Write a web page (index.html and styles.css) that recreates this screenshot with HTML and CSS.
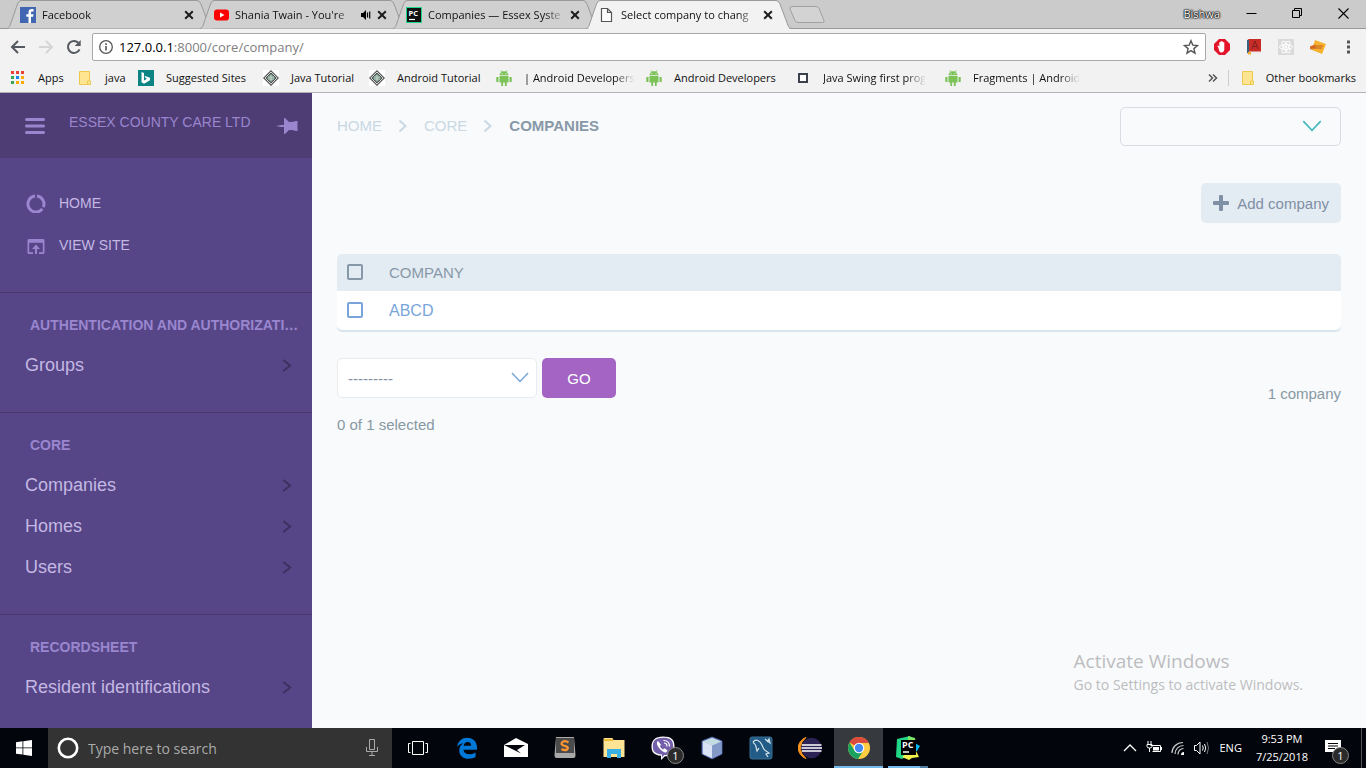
FILE: index.html
```html
<!DOCTYPE html>
<html lang="en">
<head>
<meta charset="utf-8">
<title>Select company to change</title>
<link rel="stylesheet" href="styles.css">
</head>
<body>
<svg class="defs" width="0" height="0" aria-hidden="true">
  <symbol id="tab" viewBox="0 0 206 29"><path d="M0 28.5C2 28 2.500 27 3 25.500L10.500 4Q12 .5 14 .5H190Q192.500 .5 194 4L202 25.500Q203 28.500 206 28.500"/></symbol>
  <symbol id="x" viewBox="0 0 10 10"><path d="M1.200 1.200l7.600 7.600M8.800 1.200L1.200 8.800" stroke="#1c1c1c" stroke-width="2"/></symbol>
  <symbol id="android" viewBox="0 0 16 16"><path fill="#7bc257" d="M3.500 5.300C3.700 3.400 4.600 2.500 5.500 1.900L4.500.4l.4-.3L6 1.600c1.200-.4 2.800-.4 4 0L11.100.1l.4.3-1 1.500c1 .6 1.800 1.500 2 3.400zM3.500 6h9v6.500H10.700V16H8.900v-3.500H7.100V16H5.300v-3.500H3.500zM.3 7h2.200v5H.3zm13.200 0h2.200v5h-2.200z"/><path fill="#f2f2f2" d="M5.500 3.300h1v1h-1zm4 0h1v1h-1z"/></symbol>
  <symbol id="diamond" viewBox="0 0 16 16"><path fill="#fff" d="M0 0h16v16H0z"/><path d="M8 .8L15.200 8 8 15.200.8 8z" fill="#fff" stroke="#555" stroke-width="1.200"/><path d="M8 3l5 5-5 5-5-5z" fill="#6f9080" stroke="#333" stroke-width=".8"/><path d="M5 7h6M5 9h6M8 5v6" stroke="#dce8e0" stroke-width=".8"/></symbol>
  <symbol id="folder" viewBox="0 0 14 16"><path d="M1.500 1.500h10v9.500h1v3.500h-11z" fill="#ffe592" stroke="#ecc94e"/><path d="M9.500 14v-3h2" fill="none" stroke="#ecc94e"/></symbol>
  <symbol id="chev" viewBox="0 0 10 14"><path d="M1 1l7.500 6L1 13" fill="none" stroke="currentColor"/></symbol>
  <symbol id="down" viewBox="0 0 18 11"><path d="M1 1l8 8.500L17 1" fill="none" stroke="currentColor" stroke-width="1.500"/></symbol>
</svg>

<header class="browser">
  <div class="tabstrip">
    <div class="tab">
      <svg class="tab-shape"><use href="#tab"/></svg>
      <svg class="fav" viewBox="0 0 16 16"><path d="M0 0h16v16H0z" fill="#4267b2"/><path d="M11 16V9.800h2.100l.4-2.500H11V5.800c0-.8.300-1.300 1.300-1.300h1.300V2.300C13.300 2.200 12.600 2 11.800 2 9.800 2 8.500 3.200 8.500 5.400v1.900H6.300v2.500h2.200V16z" fill="#fff"/></svg>
      <span class="tab-title">Facebook</span>
      <button class="close" aria-label="Close Facebook"><svg><use href="#x"/></svg></button>
    </div>
    <div class="tab">
      <svg class="tab-shape"><use href="#tab"/></svg>
      <svg class="fav" viewBox="0 0 16 16"><rect x="1" y="2.500" width="15" height="11" rx="3" fill="#f00"/><path d="M7 5.500l4.500 2.500L7 10.500z" fill="#fff"/></svg>
      <span class="tab-title">Shania Twain - You're</span>
      <svg class="sound" viewBox="0 0 10 10"><path d="M0 3h2l3-3v10L2 7H0z"/><path d="M6.500 2.500v5M8.700 1.500v7" stroke="#000" stroke-width="1.200"/></svg>
      <button class="close" aria-label="Close Shania Twain"><svg><use href="#x"/></svg></button>
    </div>
    <div class="tab">
      <svg class="tab-shape"><use href="#tab"/></svg>
      <svg class="fav" viewBox="0 0 16 16"><path d="M0 0h16v16H0z" fill="#21d789"/><path d="M1 1h14v14H1z" fill="#111"/><path d="M3 12.500h6" stroke="#fff" stroke-width="1.200"/><text x="2.500" y="8.500" fill="#fff" font-family="Open Sans" font-size="7.500" font-weight="700">PC</text></svg>
      <span class="tab-title">Companies — Essex Syste</span>
      <button class="close" aria-label="Close Companies"><svg><use href="#x"/></svg></button>
    </div>
    <div class="tab active">
      <svg class="tab-shape"><use href="#tab"/></svg>
      <svg class="fav" viewBox="0 0 16 16"><path d="M2.500 1.500h6l4 4v9h-10zM8.500 1.500v4h4" fill="#fff" stroke="#555" stroke-width="1.200"/></svg>
      <span class="tab-title">Select company to chang</span>
      <button class="close" aria-label="Close Select company"><svg><use href="#x"/></svg></button>
    </div>
    <button class="newtab" aria-label="New tab"><svg viewBox="0 0 36 18"><path d="M3 .5h24q2 0 3 2l5 12q.5 2-1.500 2H9q-2 0-3-2L1 3Q.5.500 3 .5z" fill="#d3d3d3" stroke="#a0a0a0"/></svg></button>
    <div class="window-controls">
      <span class="profile">Bishwa</span>
      <button aria-label="Minimize"><svg viewBox="0 0 11 11"><path d="M.5 5.500h10" stroke="#000"/></svg></button>
      <button aria-label="Restore"><svg viewBox="0 0 11 11"><path d="M.5 2.500h7v7h-7zM2.500 2.500v-2h7v7h-2" fill="none" stroke="#000"/></svg></button>
      <button aria-label="Close window"><svg viewBox="0 0 11 11"><path d="M.5.500l10 10M10.500.500l-10 10" stroke="#000" stroke-width="1.100"/></svg></button>
    </div>
  </div>
  <div class="toolbar">
    <button aria-label="Back"><svg viewBox="0 0 16 16"><path d="M15 8H2M8 2L2 8l6 6" fill="none" stroke="#555a60" stroke-width="2"/></svg></button>
    <button aria-label="Forward"><svg viewBox="0 0 16 16"><path d="M1 8h13M8 2l6 6-6 6" fill="none" stroke="#d4d5d7" stroke-width="2"/></svg></button>
    <button aria-label="Reload"><svg viewBox="0 0 16 16"><path d="M13.500 10.300A6 6 0 1 1 12.300 3.800" fill="none" stroke="#555a60" stroke-width="2"/><path d="M14.700 1v6h-6z" fill="#555a60"/></svg></button>
    <div class="omnibox">
      <svg viewBox="0 0 14 14"><circle cx="7" cy="7" r="6.300" fill="none" stroke="#555" stroke-width="1.300"/><path d="M7 6v4.500M7 3.300v1.700" stroke="#555" stroke-width="1.600"/></svg>
      <a class="url" href="#">127.0.0.1<span>:8000/core/company/</span></a>
      <svg class="star" viewBox="0 0 16 16"><path d="M8 1.700l1.800 4.400 4.700.4-3.600 3.100 1.100 4.600-4-2.500-4 2.500 1.100-4.600L1.500 6.500l4.700-.4z" fill="none" stroke="#555" stroke-width="1.400"/></svg>
    </div>
    <div class="extensions">
      <svg viewBox="0 0 16 16"><path d="M5 0h6l5 5v6l-5 5H5l-5-5V5z" fill="#e4142b"/><path d="M4.500 9L3.300 6.800l1-.4 1 1.300V3.200h1.200v3.200V2.300h1.300v4V2.600H9v3.900-3.200h1.300V10c0 2-1 3.500-3 3.500-1.500 0-2.300-1.500-2.800-4.500z" fill="#fff"/></svg>
      <svg viewBox="0 0 16 16"><path d="M1.500 1.500Q1.500 0 3 0h12v15H3q-1.500 0-1.500-1.500z" fill="#c92b27"/><path d="M3 12.500h12V15H3z" fill="#eee"/><path d="M1 1h2v13H1z" fill="#36647e"/><path d="M6 10l3-8 3 8M7 7.500h4" fill="none" stroke="#7c2320"/><path d="M2 13h3v3l-1.500-1L2 16z" fill="#f0ad32"/></svg>
      <svg viewBox="0 0 16 16"><path d="M0 0h16v16H0z" fill="#dadada"/><g fill="none" stroke="#fff"><ellipse cx="8" cy="8" rx="6.500" ry="2.500"/><ellipse cx="8" cy="8" rx="6.500" ry="2.500" transform="rotate(60 8 8)"/><ellipse cx="8" cy="8" rx="6.500" ry="2.500" transform="rotate(120 8 8)"/></g><circle cx="8" cy="8" r="1.500" fill="#fff"/></svg>
      <svg viewBox="0 0 16 16"><path d="M5 1l11 4-4 10-10-4z" fill="#f6b22f"/><path d="M0 8l5-2 1 3-5 1zM6 7h7M6 9h6" fill="#d65d27" stroke="#d67a27" stroke-width="1.300"/></svg>
      <button aria-label="Menu"><svg viewBox="0 0 16 16"><path d="M7 1.500h3v3H7zm0 5h3v3H7zm0 5h3v3H7z" fill="#555"/></svg></button>
    </div>
  </div>
  <nav class="bookmarks" aria-label="Bookmarks">
    <a href="#"><svg viewBox="0 0 16 16"><path d="M1 1h3v3H1zm5 0h3v3H6zm5 0h3v3h-3z" fill="#ea4335"/><path d="M1 6h3v3H1zm0 5h3v3H1z" fill="#34a853"/><path d="M6 6h3v3H6z" fill="#1a87f5"/><path d="M11 6h3v3h-3zM6 11h3v3H6zm5 0h3v3h-3z" fill="#fbac08"/></svg><span>Apps</span></a>
    <a href="#"><svg><use href="#folder"/></svg><span>java</span></a>
    <a href="#"><svg viewBox="0 0 16 16"><path d="M0 0h16v16H0z" fill="#0c8484"/><path d="M3.500 2l2.500 1v7.500l3-1.700-1.500-.8-1-2.300 5.500 2v2.500L6 13.700l-2.500-1.500z" fill="#fff"/></svg><span>Suggested Sites</span></a>
    <a href="#"><svg><use href="#diamond"/></svg><span>Java Tutorial</span></a>
    <a href="#"><svg><use href="#diamond"/></svg><span>Android Tutorial</span></a>
    <a href="#"><svg><use href="#android"/></svg><span class="fade">| Android Developers</span></a>
    <a href="#"><svg><use href="#android"/></svg><span>Android Developers</span></a>
    <a href="#"><svg viewBox="0 0 16 16"><path d="M4 4h8v8H4z" fill="#fff" stroke="#3c424c" stroke-width="2"/></svg><span class="fade">Java Swing first prog</span></a>
    <a href="#"><svg><use href="#android"/></svg><span class="fade">Fragments | Android</span></a>
    <button class="more" aria-label="More bookmarks"><svg viewBox="0 0 10 10"><path d="M1 1.500L4.500 5 1 8.500M5 1.500L8.500 5 5 8.500" fill="none" stroke="#555" stroke-width="1.500"/></svg></button>
    <a class="other" href="#"><svg><use href="#folder"/></svg><span>Other bookmarks</span></a>
  </nav>
</header>

<div class="page">
  <aside class="sidebar">
    <div class="brand">
      <button aria-label="Toggle menu"><svg class="burger" viewBox="0 0 20 16"><path d="M1.500 1.500h17M1.500 8h17M1.500 14.500h17" stroke="currentColor" stroke-width="3" stroke-linecap="round"/></svg></button>
      <a href="#">ESSEX COUNTY CARE LTD</a>
      <button aria-label="Pin sidebar"><svg class="pin" viewBox="0 0 22 16"><path d="M0 8l5-1h3V0h1l4 4h3l4-1h1.500v10H20l-4-1h-3l-4 4H8V9H5z" fill="currentColor"/></svg></button>
    </div>
    <nav class="primary">
      <a href="#"><svg viewBox="0 0 20 20"><g fill="none" stroke="currentColor" stroke-width="3"><path d="M11 3.100A8 8 0 0 1 17.300 14.200"/><path d="M16.300 15.900A8 8 0 1 1 9 3.100"/></g></svg>HOME</a>
      <a href="#"><svg viewBox="0 0 20 20"><path d="M7 19H3q-1.500 0-1.500-1.500v-12Q1.500 4 3 4h14q1.500 0 1.500 1.500v12Q18.500 19 17 19h-4v-1.700h3.800V7.800H3.200v9.500H7zM9 19v-5H6l4-4.500 4 4.500h-3v5z" fill="currentColor"/></svg>VIEW SITE</a>
    </nav>
    <section>
      <h2>AUTHENTICATION AND AUTHORIZATI…</h2>
      <a href="#">Groups<svg><use href="#chev"/></svg></a>
    </section>
    <section>
      <h2>CORE</h2>
      <a href="#">Companies<svg><use href="#chev"/></svg></a>
      <a href="#">Homes<svg><use href="#chev"/></svg></a>
      <a href="#">Users<svg><use href="#chev"/></svg></a>
    </section>
    <section>
      <h2>RECORDSHEET</h2>
      <a href="#">Resident identifications<svg><use href="#chev"/></svg></a>
    </section>
  </aside>

  <main>
    <div class="topbar">
      <nav class="crumbs" aria-label="Breadcrumb">
        <a href="#">HOME</a>
        <svg viewBox="0 0 10 14"><path d="M1.500 1.500L7.500 7l-6 5.500" fill="none" stroke="currentColor" stroke-width="2"/></svg>
        <a href="#">CORE</a>
        <svg viewBox="0 0 10 14"><path d="M1.500 1.500L7.500 7l-6 5.500" fill="none" stroke="currentColor" stroke-width="2"/></svg>
        <strong>COMPANIES</strong>
      </nav>
      <div class="select user">
        <select aria-label="User menu"><option></option></select>
        <svg><use href="#down"/></svg>
      </div>
    </div>
    <div class="tools">
      <a class="add" href="#"><svg viewBox="0 0 16 16"><path d="M6 1q0-1 1-1h2q1 0 1 1v5h5q1 0 1 1v2q0 1-1 1h-5v5q0 1-1 1H7q-1 0-1-1v-5H1q-1 0-1-1V7q0-1 1-1h5z" fill="currentColor"/></svg>Add company</a>
    </div>
    <table>
      <thead><tr><th class="check"><input type="checkbox" aria-label="Select all"></th><th>COMPANY</th></tr></thead>
      <tbody><tr><td class="check"><input type="checkbox" aria-label="Select ABCD"></td><td><a href="#">ABCD</a></td></tr></tbody>
    </table>
    <div class="footer">
      <div>
        <form class="actions">
          <div class="select action">
            <select aria-label="Action"><option>---------</option></select>
            <svg><use href="#down"/></svg>
          </div>
          <button type="button" class="go">GO</button>
        </form>
        <p>0 of 1 selected</p>
      </div>
      <p class="count">1 company</p>
    </div>
  </main>
  <div class="activate"><p class="big">Activate Windows</p><p>Go to Settings to activate Windows.</p></div>
</div>

<footer class="taskbar">
  <button class="start" aria-label="Start"><svg viewBox="0 0 16 16"><path d="M0 2.200L6.500 1.300v6.200H0zM7.300 1.200L16 0v7.500H7.300zM0 8.300h6.500v6.300L0 13.700zM7.300 8.300H16V16l-8.700-1.200z" fill="#fff"/></svg></button>
  <label class="search">
    <svg class="ring" viewBox="0 0 22 22"><circle cx="11" cy="11" r="9.200" fill="none" stroke="#fff" stroke-width="2.600"/></svg>
    <input type="text" placeholder="Type here to search" aria-label="Search">
    <svg class="mic" viewBox="0 0 12 18"><path d="M3.500.500h5v10h-5zM.5 8v4.500h11V8M6 12.500v4M3 16.500h6" fill="none" stroke="#aaa"/></svg>
  </label>
  <div class="apps">
    <button aria-label="Task view"><svg viewBox="0 0 24 24"><path d="M6.500 5.500h11v13h-11zM4.500 7.500h-2v9h2M19.500 7.500h2v9h-2" fill="none" stroke="#fff"/></svg></button>
    <button aria-label="Edge"><svg viewBox="0 0 24 24"><path d="M2 11C3 5 7 1.700 12.300 1.700c6 0 9.700 4.300 9.700 9.800v2.300H8.500c.2 3 2.800 4.400 5.800 4.400 2.300 0 4.500-.7 6.300-1.800v4.700c-2 1.100-4.300 1.700-7.100 1.700-5.500 0-9.300-3.200-9.300-8.300 0-3.400 1.700-6 4.300-7.300C5.500 7.500 3.300 9 2 11zm6.600-1.200h7.600c0-2.500-1.300-3.900-3.500-3.900-2.100 0-3.600 1.400-4.100 3.900z" fill="#0078d7"/></svg></button>
    <button aria-label="Mail"><svg viewBox="0 0 24 24"><path d="M0 9l12-7 12 6v13H0z" fill="#fff"/><path d="M0 9h21l-8 5 4 3.500z" fill="#02050b"/></svg></button>
    <button aria-label="Sublime Text"><svg viewBox="0 0 24 24"><path d="M3 1h18l1.500 18q0 3-2 3h-17q-2 0-2-3z" fill="#a9a9a9"/><path d="M3 2h18v15H3z" fill="#4b4b4b"/><path d="M15.500 6.500Q12 4 9.500 6t1 3.500l3 1Q16 12 14 13.500T8.500 13" fill="none" stroke="#ff9632" stroke-width="2.200"/></svg></button>
    <button aria-label="File Explorer"><svg viewBox="0 0 24 24"><path d="M1.500 3q0-1 1-1h8l1 2h11v17h-21z" fill="#ffe394"/><path d="M2 4h9" stroke="#e9ae1d" stroke-width="1.500"/><path d="M5 13h14v9h-4v-4H9v4H5z" fill="#39b0e5"/></svg></button>
    <button aria-label="Viber"><svg viewBox="0 0 24 24"><path d="M12 .5c8.500 0 11.500 3 11.500 10s-3 9.800-9.500 9.800L10 24v-4.200C3 19 .5 16.500.5 10.500S4 .5 12 .5z" fill="#fff"/><path d="M12 1.800c7.500 0 10.200 2.500 10.200 8.700s-2.700 8.500-9 8.500L11 21.500v-3C4.500 18 1.800 15.700 1.800 10.500 1.800 4.500 5 1.800 12 1.800z" fill="#7460aa"/><path d="M7 5c-1.500.8-1.500 3 0 5.500s4 5 7 6c1.500.3 3-2 2-2.500l-2.500-1.700-1.500 1.200c-1.500-.7-2.700-2-3-3.500l1-1.200z" fill="#fff"/><path d="M12.500 4.500c4 0 6 2.500 6 6M13 7c2 0 3 1.200 3 3.500" fill="none" stroke="#fff" stroke-width="1.200"/></svg><span class="badge">1</span></button>
    <button aria-label="VirtualBox"><svg viewBox="0 0 24 24"><path d="M12 1l10 4v13l-10 5-10-5V5z" fill="#a9bbdf" stroke="#42589c"/><path d="M3 5.500l9 4v12.500l-9-4z" fill="#d9e3f5"/><path d="M21 5.500l-9 4v12.500l9-4z" fill="#8399c8"/><path d="M12 2l9 3.500-9 4-9-4z" fill="#c3dbe2"/></svg></button>
    <button aria-label="MySQL Workbench"><svg viewBox="0 0 24 24"><rect x="1" y="1" width="22" height="22" rx="2" fill="#225b85" stroke="#397099"/><path d="M4 6c3-4 7-1 9 3 1 3 2 5 4 6l3 2-3 1 2 3M4 6c1 2 3 2 3 5l1 4 2-3M16 3l5 4-1-4-2 3" fill="none" stroke="#d2e3ec" stroke-width="1.200"/></svg></button>
    <button aria-label="Eclipse"><svg viewBox="0 0 24 24"><path d="M8 1.500A11 11 0 0 0 8 22.500Q2.500 18 2.500 12T8 1.500z" fill="#f7941e" stroke="#f7941e"/><circle cx="13.500" cy="12" r="10.300" fill="#2c2255"/><path d="M4 9h19.500M3.500 12h20.500M4 15h19.500" stroke="#fff" stroke-width="1.700"/></svg></button>
    <button class="current" aria-label="Chrome"><svg viewBox="0 0 24 24"><circle cx="12" cy="12" r="11" fill="#ffcd41"/><path d="M12 12L2.500 6.500A11 11 0 0 1 21.700 7H12z" fill="#dd4b3e"/><path d="M2.500 6.500A11 11 0 0 0 11 23l5.500-8.500L12 12l-4.500 2.500z" fill="#1ba160"/><circle cx="12" cy="12" r="5.300" fill="#fff"/><circle cx="12" cy="12" r="4.200" fill="#4587f3"/></svg></button>
    <button class="running" aria-label="PyCharm"><svg viewBox="0 0 24 24"><path d="M1 3l13-3 3 5-4 14-7 4-6-2z" fill="#20d788"/><path d="M12 0l7 2 1 7-9 4z" fill="#7de868"/><path d="M17 6l7 4-3 5-5 1z" fill="#08b9f0"/><path d="M19 13l4 8-7 1-3 2-7-3 7-6z" fill="#f3f04b"/><path d="M5 4h15v15H5z" fill="#000"/><path d="M7 16h6" stroke="#fff" stroke-width="1.500"/><text x="6" y="12" fill="#fff" font-family="Open Sans" font-size="9" font-weight="700">PC</text></svg></button>
  </div>
  <div class="tray">
    <svg viewBox="0 0 16 16"><path d="M2 11l6-6 6 6" fill="none" stroke="#fff" stroke-width="1.300"/></svg>
    <svg viewBox="0 0 16 16"><path d="M4.500 5.500h10v6h-8M15.500 7v3M2 1v3M5 1v3M1 4.500h5v2Q6 8 3.500 8T1 6.500zM3.500 8v4" fill="none" stroke="#fff"/><path d="M7 7h6v3.500H7z" fill="#fff"/></svg>
    <svg viewBox="0 0 16 16"><path d="M2 13C2 7 7 2.500 13 2.500M5 14c0-5 4-8.500 8.500-8.500M8 14.500c0-3.500 2.500-6 5.500-6" fill="none" stroke="#ccc" stroke-width="1.200"/><path d="M11 15q0-3 3-3v3z" fill="#fff"/></svg>
    <svg viewBox="0 0 16 16"><path d="M.5 5.500h2L6 2v12l-3.500-3.500h-2zM8.500 5.500q1.500 2.500 0 5M10.500 4q2.500 4 0 8" fill="none" stroke="#fff"/><path d="M13 2q3 6 0 12" fill="none" stroke="#777"/></svg>
    <span class="lang">ENG</span>
    <div class="clock"><span>9:53 PM</span><span>7/25/2018</span></div>
    <button class="notes" aria-label="Notifications"><svg viewBox="0 0 16 16"><path d="M0 0h16v12h-5l-3 3v-3H0z" fill="#fff"/><path d="M3 3.500h10M3 6h10M3 8.500h7" stroke="#02050b"/></svg><span class="badge">1</span></button>
  </div>
</footer>
</body>
</html>
```
FILE: styles.css
```css
* { box-sizing: border-box; }
body {
  margin: 0;
  height: 100vh;
  display: flex;
  flex-direction: column;
  overflow: hidden;
  font-family: "Liberation Sans", Arial, sans-serif;
  font-size: 15px;
}
a { color: inherit; text-decoration: none; }
p { margin: 0; }
svg { display: block; flex: none; }
button { padding: 0; border: 0; background: none; font: inherit; color: inherit; }
.defs { position: absolute; }

/* Browser window */
.browser {
  flex: none;
  background: #f2f2f2;
  border-bottom: 1px solid #b6b0b8;
  font: 11px/16px "Open Sans", sans-serif;
  color: #111;
}
.tabstrip {
  display: flex;
  height: 29px;
  padding-left: 7px;
  background: #cbcbcb;
  box-shadow: inset 0 -1px #999;
}
.tab {
  position: relative;
  display: flex;
  align-items: center;
  width: 206px;
  height: 29px;
  padding: 1px 19px 0 13px;
  margin-right: -13px;
}
.tab-shape { position: absolute; inset: 0; width: 100%; height: 100%; fill: #d0d0d0; stroke: #999; }
.active { z-index: 1; }
.active .tab-shape { fill: #f2f2f2; }
.active::after {
  content: "";
  position: absolute;
  inset: auto 3px 0 3px;
  height: 1px;
  background: #f2f2f2;
}
.fav, .tab-title, .sound, .close { position: relative; }
.fav { width: 16px; height: 16px; }
.tab-title, .fade {
  white-space: nowrap;
  mask-image: linear-gradient(to right, #000 calc(100% - 20px), transparent);
}
.tab-title { flex: 1; margin: 0 5px 0 6px; }
.sound { width: 10px; height: 10px; margin-right: 6px; }
.close svg { width: 10px; height: 10px; }
.newtab { margin-left: 8px; padding-left: 2px; }
.newtab svg { width: 36px; height: 18px; }
.window-controls { display: flex; align-items: center; margin-left: auto; height: 27px; padding-right: 17px; }
.window-controls button + button { margin-left: 35px; }
.window-controls svg { width: 11px; height: 11px; }
.profile { margin-right: 26px; color: #fff; text-shadow: 0 0 1px #000, 0 0 1px #000, 0 0 2px #000, 0 0 2px #000; }

.toolbar { display: flex; align-items: center; gap: 12px; height: 35px; padding: 0 10px; }
.toolbar > button svg { width: 16px; height: 16px; }
.omnibox {
  flex: 1;
  display: flex;
  align-items: center;
  gap: 6px;
  height: 28px;
  padding: 0 6px;
  background: #fff;
  border: 1px solid #a9a9a9;
  border-radius: 2px;
  font-size: 13px;
}
.toolbar > .omnibox { margin-left: -2px; }
.omnibox svg { width: 14px; height: 14px; }
.omnibox .star { width: 16px; height: 16px; }
.url { flex: 1; color: #000; }
.url span { color: #808080; }
.extensions { display: flex; align-items: center; gap: 16px; margin-left: -4px; }
.extensions svg { width: 16px; height: 16px; }
.extensions button { margin-left: -2px; }

.bookmarks {
  display: grid;
  grid-template-columns: 67px 61px 125px 106px 127px 150px 149px 150px 140px 1fr auto;
  align-items: center;
  height: 28px;
  padding: 0 10px;
}
.bookmarks a { display: flex; align-items: center; gap: 12px; min-width: 0; padding-right: 10px; white-space: nowrap; }
.bookmarks svg { width: 16px; height: 16px; }
.more { justify-self: end; margin-right: 10px; }
.bookmarks .more svg { width: 10px; height: 10px; }
.bookmarks .other { gap: 10px; padding: 0 0 0 11px; border-left: 1px solid #ccc; }

/* Admin page */
.page {
  flex: 1;
  min-height: 0;
  position: relative;
  display: flex;
  overflow: hidden;
  background: #f9fafc;
  color: #8799a3;
}
.sidebar { flex: none; width: 312px; background: #564688; color: #c4b8e2; }
.brand {
  display: flex;
  align-items: center;
  height: 65px;
  padding: 0 14px 0 25px;
  background: #4e3c74;
  color: #9a86cf;
  font-size: 14px;
}
.brand a { flex: 1; padding: 0 0 8px 24px; }
.burger { width: 20px; height: 16px; }
.pin { width: 22px; height: 16px; }
.primary { padding: 24px 26px 26px; font-size: 14px; }
.primary a { display: flex; align-items: center; gap: 13px; height: 42px; }
.primary svg { width: 20px; height: 20px; color: #9a86cf; }
.sidebar section { padding: 22px 20px 26px 25px; border-top: 1px solid #483868; }
.sidebar h2 {
  margin: 0 0 10px;
  padding-left: 5px;
  white-space: nowrap;
  font-size: 14px;
  line-height: 20px;
  color: #9a86cf;
}
.sidebar section a { display: flex; align-items: center; justify-content: space-between; height: 41px; font-size: 18px; }
.sidebar section svg { width: 10px; height: 13px; color: #3d2f5e; stroke-width: 2; }

main { flex: 1; min-width: 0; padding: 14px 25px; }
.topbar { display: flex; justify-content: space-between; align-items: center; }
.crumbs { display: flex; align-items: center; gap: 16px; padding-bottom: 2px; color: #c8d8e4; }
.crumbs svg { width: 10px; height: 14px; }
.crumbs strong { color: #8799a8; }
.select { position: relative; }
.select select {
  display: block;
  width: 100%;
  height: 100%;
  padding: 0 10px;
  appearance: none;
  border: 1px solid #e9ecef;
  border-radius: 5px;
  background: #fff;
  font: inherit;
  color: #7f8fa4;
}
.select svg { position: absolute; top: 14px; right: 8px; width: 18px; height: 11px; pointer-events: none; }
.user { width: 221px; height: 39px; color: #44b8bf; }
.user select { background: transparent; border-color: #dadbe3; }
.user svg { top: 13px; right: 19px; width: 20px; height: 12px; }
.action { width: 200px; height: 40px; color: #79a5da; }
.tools { display: flex; justify-content: flex-end; padding: 37px 0 31px; }
.add {
  display: flex;
  align-items: center;
  gap: 8px;
  height: 40px;
  padding: 0 12px;
  border-radius: 5px;
  background: #e3ebf3;
  color: #7f8fa4;
}
.add svg { width: 16px; height: 16px; }
table {
  width: 100%;
  border-collapse: separate;
  border-spacing: 0;
  border-radius: 5px;
  background: #fff;
  box-shadow: 0 2px #d9e5ed;
  overflow: hidden;
}
th, td { padding: 0; text-align: left; font-weight: 400; }
th { height: 37px; background: #e3ebf3; color: #8799a8; }
td { height: 39px; color: #79a5da; font-size: 16px; }
.check { width: 52px; padding: 0 0 2px 10px; }
input[type="checkbox"] {
  display: block;
  width: 16px;
  height: 16px;
  margin: 0;
  appearance: none;
  border: 2px solid;
  border-radius: 2px;
}
th input[type="checkbox"] { border-color: #8799a8; }
td input[type="checkbox"] { border-color: #79a5da; }
.footer { display: flex; justify-content: space-between; align-items: center; padding-top: 28px; }
.count { padding-bottom: 4px; }
.actions { display: flex; gap: 5px; margin-bottom: 18px; }
.go { width: 74px; height: 40px; border-radius: 5px; background: #a464c4; color: #fff; }
.activate { position: absolute; right: 63px; bottom: 33px; color: #bcbdbf; font: 14px/21px "Open Sans", sans-serif; }
.activate .big { font-size: 19px; line-height: 26px; }

/* Desktop taskbar */
.taskbar { flex: none; display: flex; height: 40px; background: #02050b; color: #fff; font: 11px/18px "Open Sans", sans-serif; }
.start { display: grid; place-items: center; width: 48px; }
.start svg { width: 16px; height: 16px; }
.search { display: flex; align-items: center; width: 344px; padding: 0 14px 0 9px; background: #333; }
.ring { width: 22px; height: 22px; }
.search input { flex: 1; min-width: 0; margin: 0; padding: 0 9px; border: 0; outline: 0; background: none; font: 14px "Open Sans", sans-serif; color: #fff; }
.search input::placeholder { color: #aaa; }
.mic { width: 12px; height: 18px; }
.apps { display: flex; padding-left: 1px; }
.apps button { position: relative; display: grid; place-items: center; width: 49px; }
.apps svg { width: 24px; height: 24px; }
.apps .current { background: #36393e; box-shadow: inset 0 -2px #76b9ed; }
.apps .running { background: linear-gradient(to right, #76b9ed 32px, #4d7da3 32px) center bottom / 40px 2px no-repeat; }
.badge {
  position: absolute;
  right: 3px;
  bottom: 4px;
  width: 17px;
  height: 17px;
  border: 1px solid #888;
  border-radius: 50%;
  background: #2b2b2b;
  line-height: 15px;
  text-align: center;
}
.tray { display: flex; align-items: center; margin-left: auto; padding-right: 20px; border-right: 1px solid #555; margin-right: 4px; }
.tray svg { width: 16px; height: 16px; margin-right: 8px; }
.lang { margin-left: 1px; }
.clock { display: flex; flex-direction: column; align-items: center; margin: 0 17px 0 14px; }
.notes { position: relative; }
.tray .notes svg { margin: 0; }
.notes .badge { right: -8px; bottom: -8px; }
```
